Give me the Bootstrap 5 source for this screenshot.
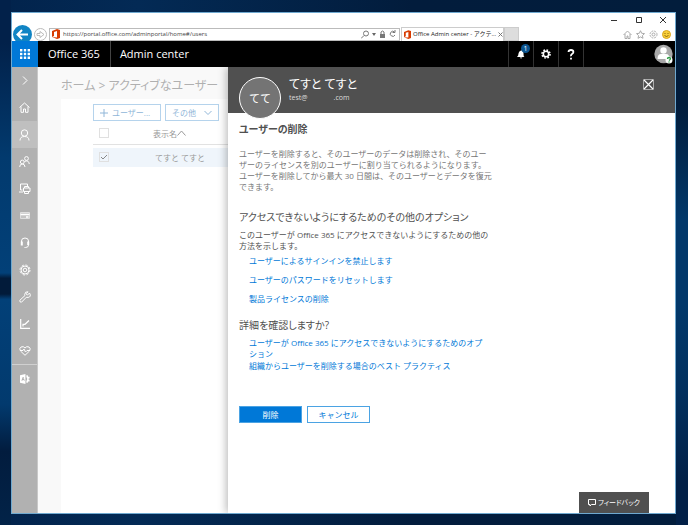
<!DOCTYPE html>
<html lang="ja">
<head>
<meta charset="utf-8">
<meta name="viewport" content="width=device-width, initial-scale=1">
<title>Office Admin center - アクティブなユーザー</title>
<link href="https://cdn.jsdelivr.net/npm/bootstrap@5.3.0/dist/css/bootstrap.min.css" rel="stylesheet">
<style>
:root{--ui:"Open Sans","Noto Sans CJK JP",sans-serif;--accent:#0078d7}
body{font-family:var(--ui);font-size:8px;line-height:11px;color:#505050;
 background:linear-gradient(#02214a 8%,#023a6e 30%,#024078 52%,#021b3a 53%,#021b3a 56%,#024078 57%,#023a6e 77%,#021c3e 86%,#022348) left/11px 100% no-repeat,
 linear-gradient(#021d3c 20%,#02386a 42%,#02386a 58%,#02305e 75%,#022047 92%) right/12px 100% no-repeat,
 linear-gradient(90deg,#02234c,#032a55 20%,#021c3c 60%,#021d3c);
 padding:12px 12px 11px 11px}
svg{display:block;flex:none}
svg:not([fill]){fill:none}
svg:not([stroke]){stroke:currentColor}
button{font:inherit;color:inherit;background:none;border:0;padding:0}
a{text-decoration:none}
.browser{border:1px solid #6fa9d0;background:#fff}
.caption{height:14px;padding-right:8px;gap:15px;color:#333}
.toolbar{height:14px;color:#777}
.back{width:19px;height:19px;border-radius:50%;background:#1084c4;color:#fff;margin:0 2px 0 1px}
.fwd{width:13px;height:13px;border:1px solid #bbb;border-radius:50%;color:#bbb;margin-right:2px}
.address{width:351px;height:13px;border:1px solid #bbb;padding:0 3px 0 2px;gap:3px}
.address input{border:0;outline:0;padding:0;min-width:0;font-family:"Open Sans",sans-serif;font-size:6px;height:10px;color:#444}
.tabitem{width:103px;height:14px;border:1px solid #ccc;border-bottom:0;padding:0 2px;font-size:6px;color:#222;gap:2px;margin-left:1px}
.newtab{width:15px;height:14px;background:#ddd;border:1px solid #ccc}
.tools{color:#aaa}
.suite{background:#000;color:#fff;height:26px}
.waffle{width:26px;background:var(--accent)}
.brand{font-size:11px;line-height:26px;padding:0 10px}
.brand+.brand{border-left:1px solid #444;padding-left:9px}
.suitebtn{width:25px;border-left:1px solid #333}
.account{padding-left:46px;padding-right:2px}
.count{position:absolute;top:3px;right:3px;width:9px;height:9px;border-radius:50%;background:#0b548f;font-size:7px;line-height:9px}
.rail{width:26px;background:#b1b1b1;color:#fff;border-right:1px solid #c8c8c8}
.rail a{height:27px;color:#fff}
.rail a.active{background:#bfbfbf}
.rail .split{border-top:1px solid #d0d0d0;height:29px}
.listpane{width:190px;background:#f9f9f9;padding:12px 0 0 23px;color:#999}
.crumb{font-size:12px;line-height:14px;margin-bottom:6px;color:#b0b0b0;font-feature-settings:"palt"}
.sheet{background:#fff;padding:5px 0 0 32px}
.ghost{border:1px solid #b5d3ec;height:17px;color:#90b6d8;padding:0 6px}
.ghost.wide{width:68px}
.users{width:100%}
.users th{font-weight:400;height:23px;padding-top:3px;border-bottom:1px solid #e2e2e2}
.users th:first-child{width:59px}
.users td{height:19px;background:#eff5fb}
.users td+td{padding-left:3px}
.users tbody::before{content:"";display:block;height:3px}
.pick{appearance:none;width:10px;height:10px;border:1px solid #e0e0e0;margin:0 0 0 5px;display:block}
.pick:checked{background:no-repeat center/8px url("data:image/svg+xml,%3Csvg xmlns='http://www.w3.org/2000/svg' viewBox='0 0 8 8'%3E%3Cpath d='M1 4l2 2 4-4' fill='none' stroke='%23888'/%3E%3C/svg%3E")}
.detail{background:#fff;box-shadow:-2px 0 8px #0004}
.persona{background:#505050;color:#fff;height:46px;padding:0 21px 0 11px}
.avatar{width:42px;height:42px;border:1px solid #fff;border-radius:50%;background:#747474;font-size:11px;margin-top:10px}
.who{margin:11px 0 0 8px}
.who h1{font-size:12px;line-height:13px;font-weight:400;margin:0;font-feature-settings:"palt"}
.who p{font-size:7px;line-height:13px;margin:0;color:#ddd}
.who .gap{display:inline-block;width:26px}
.copy{padding:9px 11px 0}
.copy h2{font-size:10px;line-height:14px;margin:14px 0 5px;font-weight:400;font-feature-settings:"palt"}
.copy h2.title{font-weight:700;margin:0 0 12px}
.copy p{margin:0}
.copy p.lead-in{color:#757575;margin-bottom:18px}
.links{padding-left:10px;margin-top:4px;gap:8px}
.links.tight{gap:1px}
.links a{color:var(--accent)}
.actions{margin-top:35px;gap:5px}
.act{width:63px;height:17px;border:1px solid #4ba3e3;color:var(--accent)}
.act.go{background:var(--accent);color:#fff}
.feedback{position:absolute;right:26px;bottom:0;width:70px;height:21px;background:#505050;color:#fff;font-size:7px;gap:2px;font-feature-settings:"palt"}
</style>
</head>
<body class="min-vh-100 d-flex">
<div class="browser flex-fill d-flex flex-column position-relative overflow-hidden">
 <div class="caption d-flex justify-content-end align-items-center">
  <button aria-label="最小化"><svg width="10" height="10"><path d="M2 5.500h6"/></svg></button>
  <button aria-label="最大化"><svg width="10" height="10"><path d="M2.500 2.500h5v5h-5z"/></svg></button>
  <button aria-label="閉じる"><svg width="8" height="10"><path d="M1 2l6 6M7 2L1 8"/></svg></button>
 </div>
 <div class="toolbar d-flex align-items-center">
  <button class="back d-flex align-items-center justify-content-center" aria-label="戻る"><svg width="13" height="13" stroke-width="2"><path d="M12 6.500H2M6 2L1.500 6.500 6 11"/></svg></button>
  <button class="fwd d-flex align-items-center justify-content-center" aria-label="進む"><svg width="9" height="9"><path d="M1 3.500h3V1.500l4 3-4 3v-2H1z"/></svg></button>
  <div class="address d-flex align-items-center">
   <svg width="8" height="10" stroke="none"><path fill="#d83b01" d="M0 2l5-2 3 1v8L5 10 0 8l5 .5V2L2 3v4L0 8z"/></svg>
   <input class="flex-fill" aria-label="アドレス" value="https://portal.office.com/adminportal/home#/users">
   <svg width="8" height="9"><circle cx="5" cy="3.500" r="2.500"/><path d="M3 5.500L0 8.500"/></svg>
   <svg width="4" height="3" stroke="none" fill="#666"><path d="M0 0h4L2 3z"/></svg>
   <svg width="7" height="8"><path fill="#777" stroke="none" d="M1 4h5v4H1z"/><path d="M2 4V2q1.500-2 3 0v2"/></svg>
   <svg width="7" height="8"><path d="M5.500 2A2.500 2.500 0 106 5M6 0v2.500H3.500"/></svg>
  </div>
  <div class="tabitem d-flex align-items-center">
   <svg width="7" height="9" viewBox="0 0 8 10" stroke="none"><path fill="#d83b01" d="M0 2l5-2 3 1v8L5 10 0 8l5 .5V2L2 3v4L0 8z"/></svg>
   <span class="flex-fill text-nowrap">Office Admin center - アクテ...</span>
   <svg width="5" height="5" stroke="#777"><path d="M.5.5l4 4M4.500.5l-4 4"/></svg>
  </div>
  <div class="newtab"></div>
  <div class="tools d-flex ms-auto pe-1 gap-1">
   <svg width="9" height="9"><path d="M.5 5L4.500 1l4 4M2 4v4.500h2V6h1v2.500h2V4"/></svg>
   <svg width="9" height="9"><path d="M4.500.7l1.200 2.600 2.800.3-2.100 2 .6 2.700-2.500-1.400L2 8.300l.6-2.700-2.100-2 2.800-.3z"/></svg>
   <svg width="9" height="9"><circle cx="4.500" cy="4.500" r="3.500" stroke-dasharray="1.800 1"/><circle cx="4.500" cy="4.500" r="1.500"/></svg>
   <svg width="9" height="9"><circle cx="4.500" cy="4.500" r="4" fill="#f9cf3a" stroke="#d9a520"/><path stroke="#704c00" d="M2.500 3.500h1m2 0h1M2.500 5.500q2 2 4 0" stroke-width=".8"/></svg>
  </div>
 </div>
 <nav class="suite d-flex">
  <button class="waffle d-flex align-items-center justify-content-center" aria-label="アプリ"><svg width="10" height="10" stroke="none" fill="#fff"><path d="M0 0h2.400v2.400H0zM3.800 0h2.400v2.400H3.800zM7.600 0H10v2.400H7.600zM0 3.800h2.400v2.400H0zM3.800 3.800h2.400v2.400H3.800zM7.600 3.800H10v2.400H7.600zM0 7.600h2.400V10H0zM3.800 7.600h2.400V10H3.800zM7.600 7.600H10V10H7.600z"/></svg></button>
  <span class="brand">Office 365</span><span class="brand">Admin center</span>
  <div class="d-flex ms-auto">
   <button class="suitebtn position-relative d-flex align-items-center justify-content-center" aria-label="通知"><svg width="10" height="10" stroke="none" fill="#fff"><path d="M1 8q1.500-1.500 1.500-3.500T5 1.500 7.500 4.500 9 8zM3.800 8.500h2.600Q5 10.500 3.800 8.500z"/></svg><span class="count">1</span></button>
   <button class="suitebtn d-flex align-items-center justify-content-center" aria-label="設定"><svg width="10" height="10"><circle cx="5" cy="5" r="2.700" stroke-width="1.600"/><circle cx="5" cy="5" r="4" stroke-width="1.600" stroke-dasharray="1.640 1.500"/></svg></button>
   <button class="suitebtn" aria-label="ヘルプ"><svg class="mx-auto" width="8" height="11" stroke-width="1.800"><path d="M1.500 3Q1.700 1 4 1t2.400 2Q6.400 4.200 5 5T4 7.300M4 8.700v1.800"/></svg></button>
   <div class="suitebtn"></div>
  </div>
  <button class="account" aria-label="アカウント"><svg width="19" height="20" stroke="none"><circle cx="9.500" cy="10" r="9.200" fill="#a9a9a9"/><circle cx="9.500" cy="6.500" r="3.200" fill="#fff"/><path fill="#fff" d="M3.500 15q0-5 3.500-5h5q3.500 0 3.500 5z"/><circle cx="15" cy="16" r="3.500" fill="#fff"/><path stroke="#2e9e45" fill="none" stroke-width="1.400" d="M13.500 15q0-1.500 1.500-1.500t1.500 1.300q0 .7-1.500 1.700M15 17.500v1"/></svg></button>
 </nav>
 <div class="d-flex flex-fill">
  <nav class="rail d-flex flex-column flex-shrink-0">
   <a href="#" class="d-flex align-items-center justify-content-center" aria-label="展開"><svg width="6" height="9"><path d="M1 .5l4 4-4 4"/></svg></a>
   <a href="#" class="d-flex align-items-center justify-content-center" aria-label="ホーム"><svg width="11" height="11"><path d="M.5 5.500l5-4.500 5 4.500M2 4.500v5.800h2.500V7h2v3.300H9V4.500"/></svg></a>
   <a href="#" class="active d-flex align-items-center justify-content-center" aria-label="ユーザー"><svg width="11" height="12"><circle cx="5.500" cy="4" r="3.200"/><path d="M1 11.500Q1 7.500 5.500 7.500T10 11.500"/></svg></a>
   <a href="#" class="d-flex align-items-center justify-content-center" aria-label="グループ"><svg width="11" height="12"><circle cx="7.500" cy="2.500" r="1.900"/><path d="M5.500 5.500q4-2 4.800 2.500"/><circle cx="3.300" cy="6" r="1.900"/><path d="M.7 11q0-3 2.600-3T6 11"/></svg></a>
   <a href="#" class="d-flex align-items-center justify-content-center" aria-label="リソース"><svg width="12" height="11"><path d="M3.500 7H1.500V1h7v2.500M0 9h4"/><path d="M5.500 5V3.500h4V5M4.500 8.500V5h6.500v3.500H4.500M5.500 8.500v2h4v-2"/></svg></a>
   <a href="#" class="d-flex align-items-center justify-content-center" aria-label="課金情報"><svg width="10" height="7"><path d="M.5.5h9v6h-9z" fill="#c4c4c4" stroke="#ddd"/><path stroke-width="1.400" d="M.5 2.500h9M6 5h2.500"/></svg></a>
   <a href="#" class="d-flex align-items-center justify-content-center" aria-label="サポート"><svg width="10" height="12"><path d="M1.500 5V4q0-3 3.500-3t3.500 3v4q0 2.500-3 2.500H4.500"/><path stroke-width="2" d="M1.800 4.500v4M8.200 4.500v3.500"/></svg></a>
   <a href="#" class="d-flex align-items-center justify-content-center" aria-label="設定"><svg width="12" height="12"><circle cx="6" cy="6" r="4"/><circle cx="6" cy="6" r="5" stroke-dasharray="2.200 1.700"/><circle cx="6" cy="6" r="1.800"/></svg></a>
   <a href="#" class="d-flex align-items-center justify-content-center" aria-label="セットアップ"><svg width="12" height="12"><path d="M10.500 2L8.500 4 7.500 3.500 7.300 2.500 9 .8Q6 .3 5.700 3.500L6 4.500.8 9.300q-.5 2 1.700 1.900L7.300 6.300q4.200.7 4-2.500z"/></svg></a>
   <a href="#" class="d-flex align-items-center justify-content-center" aria-label="レポート"><svg width="10" height="10"><path d="M.7 0v9.300H10M3 7.500V5.300h2L9 1.500" stroke-width="1.200"/></svg></a>
   <a href="#" class="d-flex align-items-center justify-content-center" aria-label="正常性"><svg width="12" height="10"><path d="M6 9.300L1.500 5Q-.2 2.500 2 1 4.500-.2 6 2 7.500-.2 10 1q2.200 1.500.5 4zM1 4.500h3L5 3l1.500 3L8 4.500h3"/></svg></a>
   <a href="#" class="split d-flex align-items-center justify-content-center" aria-label="管理センター"><svg width="10" height="10" viewBox="0 0 11 11" stroke="none" fill="#fff"><path fill-rule="evenodd" d="M0 1.500L6 0v11L0 9.500zM1.500 7.500h1l.5-1h1l.4 1h.8L3.900 3.300H3zM3.200 5.500l.3-1 .3 1z"/><path d="M7 1.500h1.500L9 3h1.500v2h-1v1.300h1v2H9L8.500 9.500H7V8q2-2.500 0-5z"/></svg></a>
  </nav>
  <main class="listpane flex-shrink-0 overflow-hidden">
   <div class="crumb text-nowrap">ホーム &gt; アクティブなユーザー</div>
   <div class="sheet h-100">
    <div class="d-flex text-nowrap gap-1">
     <button class="ghost wide d-flex align-items-center gap-1"><svg width="8" height="8"><path d="M4 0v8M0 4h8"/></svg>ユーザー...</button>
     <button class="ghost d-flex align-items-center gap-2">その他 <svg width="8" height="6"><path d="M.5 1L4 4.500 7.500 1"/></svg></button>
    </div>
    <table class="users">
     <thead><tr><th><input class="pick" type="checkbox" aria-label="すべて選択"></th><th><span class="d-flex align-items-center">表示名<svg width="9" height="6" stroke="#999"><path d="M.5 5.500l4-4.500 4 4.500"/></svg></span></th></tr></thead>
     <tbody><tr><td><input class="pick" type="checkbox" checked aria-label="てすと てすと"></td><td>てすと てすと</td></tr></tbody>
    </table>
   </div>
  </main>
  <section class="detail flex-fill position-relative">
   <header class="persona d-flex align-items-start">
    <div class="avatar d-flex align-items-center justify-content-center">てて</div>
    <div class="who"><h1>てすと てすと</h1><p>test@<span class="gap"></span>.com</p></div>
    <button class="ms-auto mt-2 pt-1" aria-label="閉じる"><svg width="11" height="11"><path d="M.5.5h10v10H.5z" stroke="#aaa"/><path d="M1 1l9 9M10 1l-9 9" stroke-width="1.200"/></svg></button>
   </header>
   <div class="copy">
    <h2 class="title">ユーザーの削除</h2>
    <p class="lead-in">ユーザーを削除すると、そのユーザーのデータは削除され、そのユー<br>ザーのライセンスを別のユーザーに割り当てられるようになります。<br>ユーザーを削除してから最大 30 日間は、そのユーザーとデータを復元<br>できます。</p>
    <h2>アクセスできないようにするためのその他のオプション</h2>
    <p>このユーザーが Office 365 にアクセスできないようにするための他の<br>方法を示します。</p>
    <div class="links d-grid"><a href="#">ユーザーによるサインインを禁止します</a><a href="#">ユーザーのパスワードをリセットします</a><a href="#">製品ライセンスの削除</a></div>
    <h2>詳細を確認しますか?</h2>
    <div class="links tight d-grid"><a href="#">ユーザーが Office 365 にアクセスできないようにするためのオプ<br>ション</a><a href="#">組織からユーザーを削除する場合のベスト プラクティス</a></div>
    <div class="actions d-flex"><button class="act go">削除</button><button class="act">キャンセル</button></div>
   </div>
  </section>
 </div>
 <button class="feedback d-flex align-items-center justify-content-center"><svg width="8" height="8"><path d="M.5.5h7v5H3.500L2 7V5.500H.5z"/></svg>フィードバック</button>
</div>
<script src="https://cdn.jsdelivr.net/npm/bootstrap@5.3.0/dist/js/bootstrap.bundle.min.js"></script>
</body>
</html>
